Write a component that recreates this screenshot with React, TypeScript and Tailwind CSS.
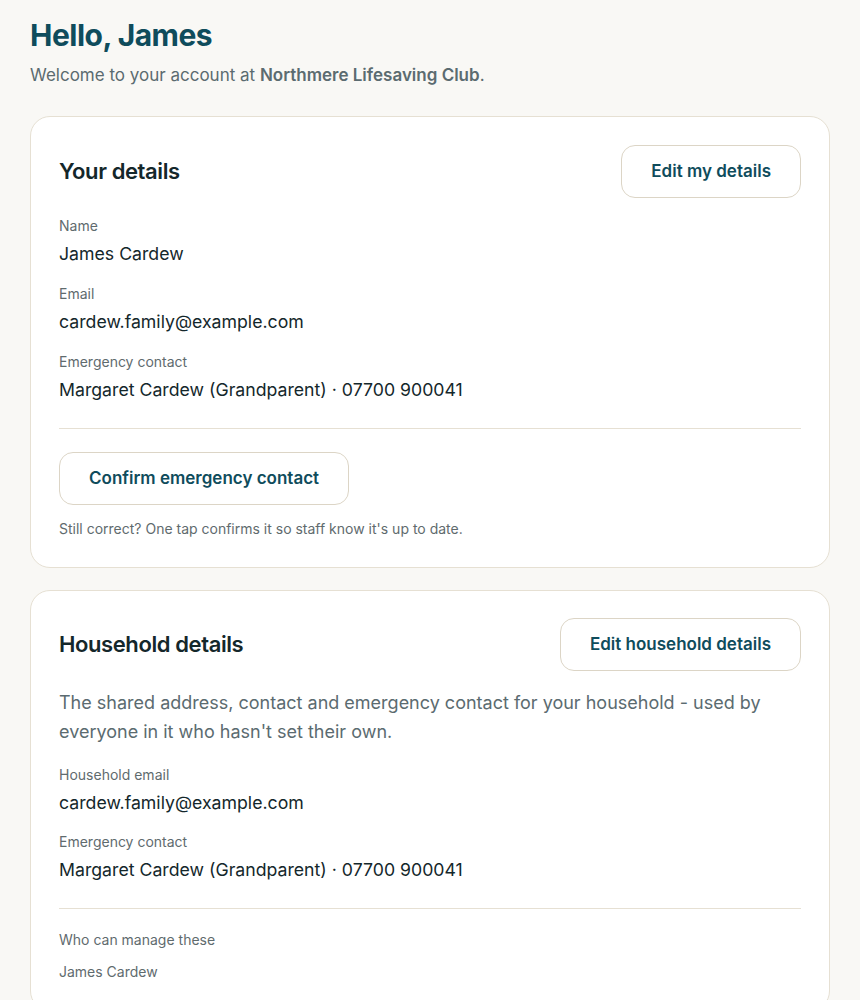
const teal = "text-[#0f4c5c]";

function Field({ label, value }: { label: string; value: string }) {
  return (
    <div className="flex flex-col gap-[5px]">
      <div className="text-[14px] leading-[20px] text-[#5f6b6e]">{label}</div>
      <div className="text-[17.7px] leading-[26px] text-[#14272b]">{value}</div>
    </div>
  );
}

function OutlineButton({ children }: { children: React.ReactNode }) {
  return (
    <button className={`h-[53px] px-[29px] rounded-[14px] border border-[#dcd5c6] bg-white text-[17px] font-semibold ${teal}`}>
      {children}
    </button>
  );
}

export default function App() {
  return (
    <div className="min-h-screen bg-[#f9f8f5] px-[30px] pt-[16px] pb-10 font-['Inter','Noto_Sans',sans-serif]">
      <h1 className={`text-[30px] leading-[38px] font-bold tracking-[-0.5px] ${teal}`}>Hello, James</h1>
      <p className="mt-[9px] text-[17px] leading-[24px] text-[#5b6b70]">
        Welcome to your account at <span className="font-semibold">Northmere Lifesaving Club</span>.
      </p>

      <section className="mt-[29px] rounded-[20px] border border-[#e6e0d3] bg-white px-[28px] pt-[28px] pb-[28px]">
        <div className="flex items-center justify-between">
          <h2 className="text-[22px] font-semibold tracking-[-0.4px] text-[#14272b]">Your details</h2>
          <OutlineButton>Edit my details</OutlineButton>
        </div>
        <div className="mt-[18px] flex flex-col gap-[17px]">
          <Field label="Name" value="James Cardew" />
          <Field label="Email" value="cardew.family@example.com" />
          <Field label="Emergency contact" value="Margaret Cardew (Grandparent) · 07700 900041" />
        </div>
        <div className="mt-[25px] border-t border-[#e6e0d3]" />
        <div className="mt-[23px]">
          <OutlineButton>Confirm emergency contact</OutlineButton>
        </div>
        <p className="mt-[14px] text-[14px] leading-[20px] text-[#5f6b6e]">
          Still correct? One tap confirms it so staff know it's up to date.
        </p>
      </section>

      <section className="mt-[22px] rounded-[20px] border border-[#e6e0d3] bg-white px-[28px] pt-[27px] pb-[28px]">
        <div className="flex items-center justify-between">
          <h2 className="text-[22px] font-semibold tracking-[-0.4px] text-[#14272b]">Household details</h2>
          <OutlineButton>Edit household details</OutlineButton>
        </div>
        <p className="mt-[17px] text-[18px] leading-[29px] text-[#5b6b70]">
          The shared address, contact and emergency contact for your household - used by everyone in it who hasn't set their own.
        </p>
        <div className="mt-[19px] flex flex-col gap-[16px]">
          <Field label="Household email" value="cardew.family@example.com" />
          <Field label="Emergency contact" value="Margaret Cardew (Grandparent) · 07700 900041" />
        </div>
        <div className="mt-[25px] border-t border-[#e6e0d3]" />
        <div className="mt-[21px] text-[14px] leading-[20px] text-[#5f6b6e]">Who can manage these</div>
        <div className="mt-[12px] text-[14px] leading-[20px] text-[#5f6b6e]">James Cardew</div>
      </section>
    </div>
  );
}
